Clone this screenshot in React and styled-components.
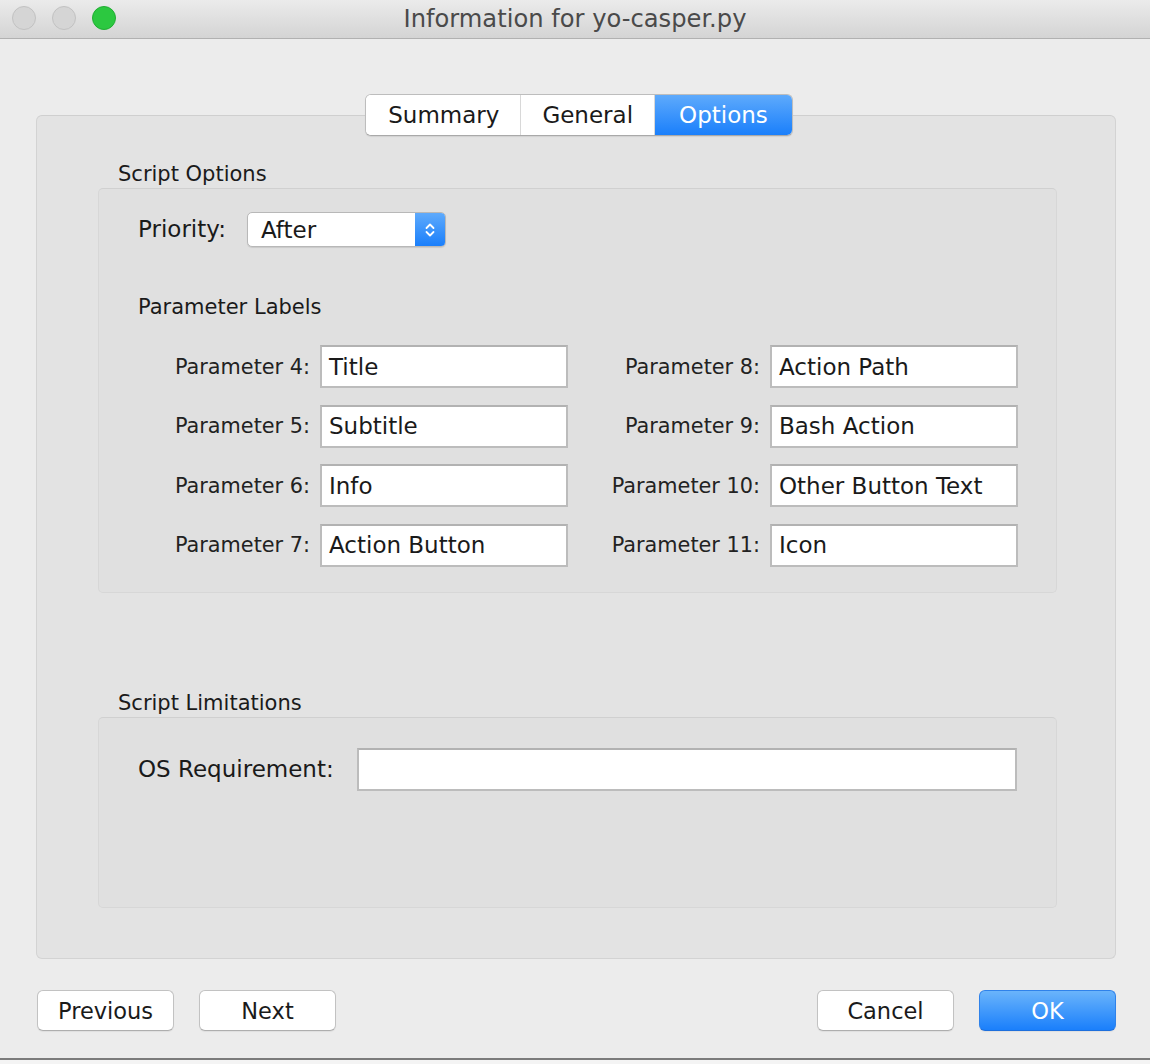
import React from "react";
import styled, { createGlobalStyle } from "styled-components";

const GlobalStyle = createGlobalStyle`
  html, body {
    margin: 0;
    padding: 0;
    background: #ececec;
  }
  body {
    font-family: "DejaVu Sans", "Liberation Sans", sans-serif;
    color: #1a1a1a;
  }
`;

const leftParams = [
  { label: "Parameter 4:", value: "Title" },
  { label: "Parameter 5:", value: "Subtitle" },
  { label: "Parameter 6:", value: "Info" },
  { label: "Parameter 7:", value: "Action Button" },
];

const rightParams = [
  { label: "Parameter 8:", value: "Action Path" },
  { label: "Parameter 9:", value: "Bash Action" },
  { label: "Parameter 10:", value: "Other Button Text" },
  { label: "Parameter 11:", value: "Icon" },
];

const App = () => {
  const rows = leftParams.map((p, i) => [p, rightParams[i]]);
  return (
    <>
      <GlobalStyle />
      <Window>
        <TitleBar>
          <Lights>
            <Light />
            <Light />
            <Light $green />
          </Lights>
          <Title>Information for yo-casper.py</Title>
        </TitleBar>

        <Body>
          <Tabs>
            <Tab>Summary</Tab>
            <Tab>General</Tab>
            <Tab $active>Options</Tab>
          </Tabs>

          <Panel>
            <SectionTitle>Script Options</SectionTitle>
            <Group>
              <Row $gap={21}>
                <BigLabel>Priority:</BigLabel>
                <Popup>
                  <span>After</span>
                  <PopupArrows>
                    <svg width="12" height="20" viewBox="0 0 12 20">
                      <path
                        d="M2.5 8 L6 4.5 L9.5 8 M2.5 12 L6 15.5 L9.5 12"
                        fill="none"
                        stroke="#fff"
                        strokeWidth="1.8"
                        strokeLinecap="round"
                        strokeLinejoin="round"
                      />
                    </svg>
                  </PopupArrows>
                </Popup>
              </Row>

              <SubTitle>Parameter Labels</SubTitle>

              <ParamGrid>
                {rows.map(([l, r]) => (
                  <React.Fragment key={l.label}>
                    <ParamLabel>{l.label}</ParamLabel>
                    <TextField>{l.value}</TextField>
                    <ParamLabel>{r.label}</ParamLabel>
                    <TextField>{r.value}</TextField>
                  </React.Fragment>
                ))}
              </ParamGrid>
            </Group>

            <SectionTitle $spaced>Script Limitations</SectionTitle>
            <Group $limits>
              <Row $gap={23}>
                <BigLabel>OS Requirement:</BigLabel>
                <TextField $wide />
              </Row>
            </Group>
          </Panel>

          <Buttons>
            <ButtonGroup>
              <Button>Previous</Button>
              <Button>Next</Button>
            </ButtonGroup>
            <ButtonGroup>
              <Button>Cancel</Button>
              <Button $primary>OK</Button>
            </ButtonGroup>
          </Buttons>
        </Body>
        <BottomEdge />
      </Window>
    </>
  );
};

const Window = styled.div`
  width: 1150px;
  height: 1064px;
  background: #ececec;
  display: flex;
  flex-direction: column;
  overflow: hidden;
`;

const TitleBar = styled.div`
  height: 38px;
  flex-shrink: 0;
  background: linear-gradient(#ebebeb, #d4d4d4);
  border-bottom: 1px solid #b1b1b1;
  display: flex;
  align-items: center;
  justify-content: center;
  position: relative;
`;

const Lights = styled.div`
  position: absolute;
  left: 12px;
  top: 6px;
  display: flex;
  gap: 16px;
`;

const Light = styled.div`
  width: 22px;
  height: 22px;
  border-radius: 50%;
  background: ${(p) => (p.$green ? "#2cc840" : "#d5d5d5")};
  border: 1px solid ${(p) => (p.$green ? "#21ae33" : "#c2c2c2")};
`;

const Title = styled.div`
  font-size: 24.2px;
  color: #4a4a4a;
  line-height: 38px;
`;

const Body = styled.div`
  flex: 1;
  padding: 55px 34px 0 36px;
  display: flex;
  flex-direction: column;
`;

const Tabs = styled.div`
  align-self: center;
  margin-left: 6px;
  display: flex;
  height: 42px;
  box-sizing: border-box;
  border: 1px solid #bdbdbd;
  border-bottom-color: #a9a9a9;
  border-radius: 6px;
  overflow: hidden;
  background: #fff;
  position: relative;
  z-index: 1;
  box-shadow: 0 1px 1px rgba(0, 0, 0, 0.08);
`;

const Tab = styled.div`
  display: flex;
  align-items: center;
  justify-content: center;
  font-size: 23px;
  padding: 0 ${(p) => (p.$active ? "24px" : "21px")};
  color: ${(p) => (p.$active ? "#fff" : "#1a1a1a")};
  background: ${(p) =>
    p.$active ? "linear-gradient(#5eaafc, #1a7ffb)" : "#fff"};
  & + & {
    border-left: 1px solid #d8d8d8;
  }
  &:first-child {
    padding: 0 21px 0 22px;
  }
`;

const Panel = styled.div`
  margin-top: -21px;
  height: 844px;
  box-sizing: border-box;
  background: #e3e3e3;
  border: 1px solid #d3d3d3;
  border-top-color: #cfcfcf;
  border-radius: 6px;
  padding: 46px 58px 0 61px;
  display: flex;
  flex-direction: column;
`;

const SectionTitle = styled.div`
  font-size: 21px;
  line-height: 24px;
  padding-left: 20px;
  margin-bottom: 2px;
  margin-top: ${(p) => (p.$spaced ? "98px" : "0")};
`;

const Group = styled.div`
  box-sizing: border-box;
  background: #e0e0e0;
  border: 1px solid #d7d7d7;
  border-top-color: #d0d0d0;
  border-radius: 5px;
  padding: ${(p) => (p.$limits ? "30px 38px 0 39px" : "23px 38px 25px 39px")};
  height: ${(p) => (p.$limits ? "191px" : "auto")};
`;

const Row = styled.div`
  display: flex;
  align-items: center;
  gap: ${(p) => p.$gap}px;
`;

const BigLabel = styled.div`
  font-size: 23px;
  line-height: 35px;
`;

const Popup = styled.div`
  width: 199px;
  height: 35px;
  box-sizing: border-box;
  border: 1px solid #b8b8b8;
  border-radius: 5px;
  background: #fff;
  display: flex;
  align-items: center;
  justify-content: space-between;
  overflow: hidden;
  font-size: 23px;
  box-shadow: 0 1px 1px rgba(0, 0, 0, 0.1);
  span {
    padding-left: 13px;
  }
`;

const PopupArrows = styled.div`
  width: 30px;
  height: 100%;
  background: linear-gradient(#5eaafc, #1a7ffb);
  display: flex;
  align-items: center;
  justify-content: center;
`;

const SubTitle = styled.div`
  font-size: 21px;
  line-height: 24px;
  margin-top: 48px;
`;

const ParamGrid = styled.div`
  margin-top: 26px;
  display: grid;
  grid-template-columns: 182px 248px 202px 248px;
  grid-auto-rows: 43px;
  row-gap: 16.5px;
`;

const ParamLabel = styled.div`
  font-size: 20.8px;
  color: #222;
  padding-right: 10px;
  display: flex;
  align-items: center;
  justify-content: flex-end;
`;

const TextField = styled.div`
  box-sizing: border-box;
  height: 43px;
  width: ${(p) => (p.$wide ? "660px" : "248px")};
  background: #fff;
  border: 2px solid #bcbcbc;
  border-top-color: #b2b2b2;
  font-size: 23px;
  display: flex;
  align-items: center;
  padding-left: 7px;
  white-space: nowrap;
  overflow: hidden;
`;

const Buttons = styled.div`
  margin-top: 31px;
  display: flex;
  justify-content: space-between;
  padding-left: 1px;
`;

const ButtonGroup = styled.div`
  display: flex;
  gap: 25px;
`;

const Button = styled.div`
  width: 137px;
  height: 41px;
  box-sizing: border-box;
  border-radius: 6px;
  display: flex;
  align-items: center;
  justify-content: center;
  font-size: 22.5px;
  color: ${(p) => (p.$primary ? "#fff" : "#1a1a1a")};
  background: ${(p) =>
    p.$primary ? "linear-gradient(#6ab4fb, #1a7ffb)" : "#fff"};
  border: 1px solid ${(p) => (p.$primary ? "#2f82ea" : "#c2c2c2")};
  border-bottom-color: ${(p) => (p.$primary ? "#1e6fdc" : "#aeaeae")};
  box-shadow: 0 1px 1px rgba(0, 0, 0, 0.06);
`;

const BottomEdge = styled.div`
  margin-top: auto;
  height: 4px;
  background: #f4f4f4;
  border-top: 2px solid #7b7b7b;
`;

export default App;
